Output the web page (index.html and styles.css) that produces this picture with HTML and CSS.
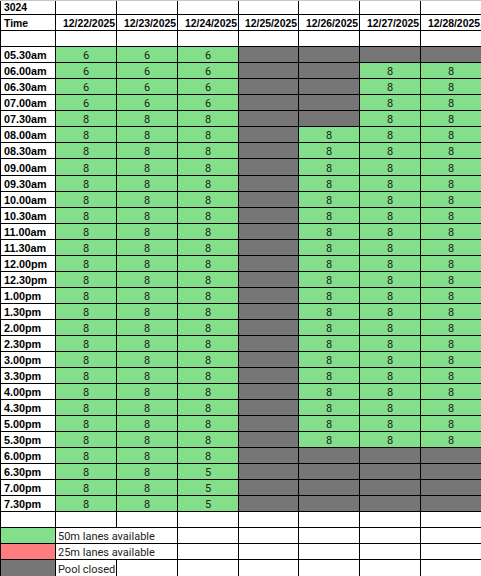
FILE: index.html
```
<!DOCTYPE html>
<html>
<head>
<meta charset="utf-8">
<title>Pool lanes 3024</title>
<link rel="stylesheet" href="styles.css">
</head>
<body>
<div class="sheet">
  <div class="c h">3024</div><div class="c"></div><div class="c"></div><div class="c"></div><div class="c"></div><div class="c"></div><div class="c"></div><div class="c"></div>
  <div class="c h">Time</div><div class="c d">12/22/2025</div><div class="c d">12/23/2025</div><div class="c d">12/24/2025</div><div class="c d">12/25/2025</div><div class="c d">12/26/2025</div><div class="c d">12/27/2025</div><div class="c d">12/28/2025</div>
  <div class="c"></div><div class="c"></div><div class="c"></div><div class="c"></div><div class="c"></div><div class="c"></div><div class="c"></div><div class="c"></div>

  <div class="c t">05.30am</div><div class="c g">6</div><div class="c g">6</div><div class="c g">6</div><div class="c x"></div><div class="c x"></div><div class="c x"></div><div class="c x"></div>
  <div class="c t">06.00am</div><div class="c g">6</div><div class="c g">6</div><div class="c g">6</div><div class="c x"></div><div class="c x"></div><div class="c g">8</div><div class="c g">8</div>
  <div class="c t">06.30am</div><div class="c g">6</div><div class="c g">6</div><div class="c g">6</div><div class="c x"></div><div class="c x"></div><div class="c g">8</div><div class="c g">8</div>
  <div class="c t">07.00am</div><div class="c g">6</div><div class="c g">6</div><div class="c g">6</div><div class="c x"></div><div class="c x"></div><div class="c g">8</div><div class="c g">8</div>
  <div class="c t">07.30am</div><div class="c g">8</div><div class="c g">8</div><div class="c g">8</div><div class="c x"></div><div class="c x"></div><div class="c g">8</div><div class="c g">8</div>
  <div class="c t">08.00am</div><div class="c g">8</div><div class="c g">8</div><div class="c g">8</div><div class="c x"></div><div class="c g">8</div><div class="c g">8</div><div class="c g">8</div>
  <div class="c t">08.30am</div><div class="c g">8</div><div class="c g">8</div><div class="c g">8</div><div class="c x"></div><div class="c g">8</div><div class="c g">8</div><div class="c g">8</div>
  <div class="c t">09.00am</div><div class="c g">8</div><div class="c g">8</div><div class="c g">8</div><div class="c x"></div><div class="c g">8</div><div class="c g">8</div><div class="c g">8</div>
  <div class="c t">09.30am</div><div class="c g">8</div><div class="c g">8</div><div class="c g">8</div><div class="c x"></div><div class="c g">8</div><div class="c g">8</div><div class="c g">8</div>
  <div class="c t">10.00am</div><div class="c g">8</div><div class="c g">8</div><div class="c g">8</div><div class="c x"></div><div class="c g">8</div><div class="c g">8</div><div class="c g">8</div>
  <div class="c t">10.30am</div><div class="c g">8</div><div class="c g">8</div><div class="c g">8</div><div class="c x"></div><div class="c g">8</div><div class="c g">8</div><div class="c g">8</div>
  <div class="c t">11.00am</div><div class="c g">8</div><div class="c g">8</div><div class="c g">8</div><div class="c x"></div><div class="c g">8</div><div class="c g">8</div><div class="c g">8</div>
  <div class="c t">11.30am</div><div class="c g">8</div><div class="c g">8</div><div class="c g">8</div><div class="c x"></div><div class="c g">8</div><div class="c g">8</div><div class="c g">8</div>
  <div class="c t">12.00pm</div><div class="c g">8</div><div class="c g">8</div><div class="c g">8</div><div class="c x"></div><div class="c g">8</div><div class="c g">8</div><div class="c g">8</div>
  <div class="c t">12.30pm</div><div class="c g">8</div><div class="c g">8</div><div class="c g">8</div><div class="c x"></div><div class="c g">8</div><div class="c g">8</div><div class="c g">8</div>
  <div class="c t">1.00pm</div><div class="c g">8</div><div class="c g">8</div><div class="c g">8</div><div class="c x"></div><div class="c g">8</div><div class="c g">8</div><div class="c g">8</div>
  <div class="c t">1.30pm</div><div class="c g">8</div><div class="c g">8</div><div class="c g">8</div><div class="c x"></div><div class="c g">8</div><div class="c g">8</div><div class="c g">8</div>
  <div class="c t">2.00pm</div><div class="c g">8</div><div class="c g">8</div><div class="c g">8</div><div class="c x"></div><div class="c g">8</div><div class="c g">8</div><div class="c g">8</div>
  <div class="c t">2.30pm</div><div class="c g">8</div><div class="c g">8</div><div class="c g">8</div><div class="c x"></div><div class="c g">8</div><div class="c g">8</div><div class="c g">8</div>
  <div class="c t">3.00pm</div><div class="c g">8</div><div class="c g">8</div><div class="c g">8</div><div class="c x"></div><div class="c g">8</div><div class="c g">8</div><div class="c g">8</div>
  <div class="c t">3.30pm</div><div class="c g">8</div><div class="c g">8</div><div class="c g">8</div><div class="c x"></div><div class="c g">8</div><div class="c g">8</div><div class="c g">8</div>
  <div class="c t">4.00pm</div><div class="c g">8</div><div class="c g">8</div><div class="c g">8</div><div class="c x"></div><div class="c g">8</div><div class="c g">8</div><div class="c g">8</div>
  <div class="c t">4.30pm</div><div class="c g">8</div><div class="c g">8</div><div class="c g">8</div><div class="c x"></div><div class="c g">8</div><div class="c g">8</div><div class="c g">8</div>
  <div class="c t">5.00pm</div><div class="c g">8</div><div class="c g">8</div><div class="c g">8</div><div class="c x"></div><div class="c g">8</div><div class="c g">8</div><div class="c g">8</div>
  <div class="c t">5.30pm</div><div class="c g">8</div><div class="c g">8</div><div class="c g">8</div><div class="c x"></div><div class="c g">8</div><div class="c g">8</div><div class="c g">8</div>
  <div class="c t">6.00pm</div><div class="c g">8</div><div class="c g">8</div><div class="c g">8</div><div class="c x"></div><div class="c x"></div><div class="c x"></div><div class="c x"></div>
  <div class="c t">6.30pm</div><div class="c g">8</div><div class="c g">8</div><div class="c g">5</div><div class="c x"></div><div class="c x"></div><div class="c x"></div><div class="c x"></div>
  <div class="c t">7.00pm</div><div class="c g">8</div><div class="c g">8</div><div class="c g">5</div><div class="c x"></div><div class="c x"></div><div class="c x"></div><div class="c x"></div>
  <div class="c t">7.30pm</div><div class="c g">8</div><div class="c g">8</div><div class="c g">5</div><div class="c x"></div><div class="c x"></div><div class="c x"></div><div class="c x"></div>

  <div class="c"></div><div class="c"></div><div class="c"></div><div class="c"></div><div class="c"></div><div class="c"></div><div class="c"></div><div class="c"></div>

  <div class="c g"></div><div class="c lg wide">50m lanes available</div><div class="c"></div><div class="c"></div><div class="c"></div><div class="c"></div><div class="c"></div>
  <div class="c p"></div><div class="c lg wide">25m lanes available</div><div class="c"></div><div class="c"></div><div class="c"></div><div class="c"></div><div class="c"></div>
  <div class="c x"></div><div class="c lg">Pool closed</div><div class="c"></div><div class="c"></div><div class="c"></div><div class="c"></div><div class="c"></div><div class="c"></div>
</div>
</body>
</html>
```

FILE: styles.css
```
html, body {
  margin: 0;
  padding: 0;
  background: #ffffff;
  overflow: hidden;
}

.sheet {
  display: grid;
  grid-template-columns: 54px 60px 60px 60px 59px 60px 60px 60px;
  grid-template-rows: 13px repeat(9, 15px) 16px repeat(24, 15px) 16px;
  gap: 1px;
  padding-left: 1px;
  background: #000000;
  border-top: 1px solid #c6c6c6;
  width: 480px;
}

.c {
  background: #ffffff;
  display: flex;
  align-items: flex-end;
  justify-content: center;
  overflow: visible;
  white-space: nowrap;
  font-family: "Roboto", "Liberation Sans", sans-serif;
  font-size: 11px;
  line-height: 13px;
  color: #16261a;
}

.g { background: #84df8b; }
.x { background: #767676; }
.p { background: #ff7c80; }

.h, .t, .d {
  font-family: "Liberation Sans", Arial, sans-serif;
  font-weight: bold;
  color: #000000;
}

.h {
  justify-content: flex-start;
  padding-left: 3px;
  font-size: 10.4px;
}

.t {
  justify-content: flex-start;
  padding-left: 3px;
  font-size: 10.8px;
}

.d {
  justify-content: flex-end;
  padding-right: 1px;
  font-size: 10.4px;
}

.lg {
  justify-content: flex-start;
  padding-left: 2px;
  font-size: 11px;
  color: #222222;
}

.wide {
  grid-column: span 2;
}
```
